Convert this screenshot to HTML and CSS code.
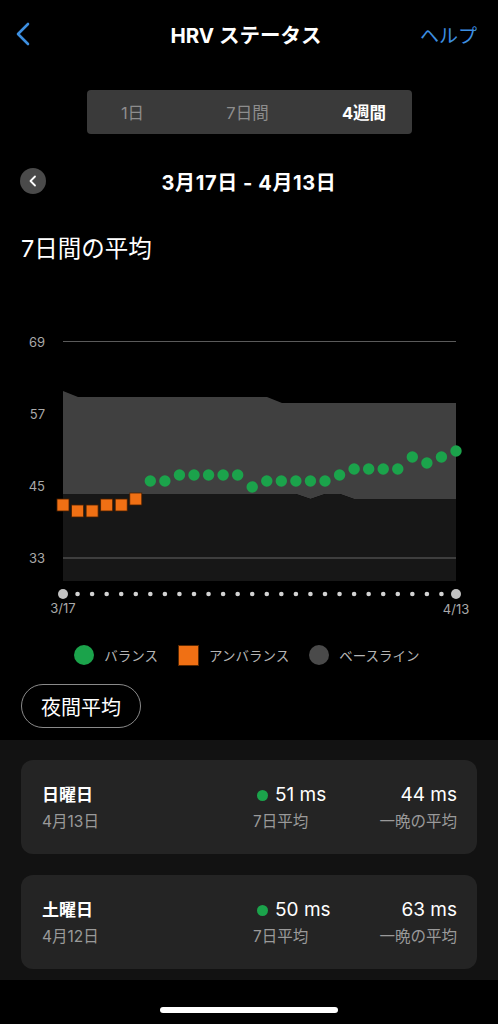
FILE: index.html
```html
<!DOCTYPE html>
<html lang="ja">
<head>
    <meta charset="UTF-8">
    <meta name="viewport" content="width=device-width, initial-scale=1.0">
    <title>HRVステータス</title>
    <link rel="stylesheet" href="styles.css">
</head>
<body>

  <div class="nav">
    <div class="nav-back">
      <svg width="16" height="24" viewBox="0 0 16 24">
        <polyline points="13,2 3,12 13,22" fill="none" stroke="#3d8fe0" stroke-width="2.6" stroke-linecap="round" stroke-linejoin="round"/>
      </svg>
    </div>
    <div class="nav-title">HRV ステータス</div>
    <div class="nav-help">ヘルプ</div>
  </div>

  <div class="segment">
    <div class="segment-item">1日</div>
    <div class="segment-item">7日間</div>
    <div class="segment-item active">4週間</div>
  </div>

  <div class="date-row">
    <div class="date-prev">
      <svg width="10" height="12" viewBox="0 0 10 12">
        <polyline points="7,1.5 2.5,6 7,10.5" fill="none" stroke="#fff" stroke-width="1.8" stroke-linecap="round" stroke-linejoin="round"/>
      </svg>
    </div>
    <div class="date-range">3月17日 - 4月13日</div>
    <div></div>
  </div>

  <h2 class="chart-title">7日間の平均</h2>

  <div class="chart">
    <svg width="498" height="356" viewBox="0 264 498 356">
      <!-- grid labels -->
      <g class="axis-label">
        <text x="45" y="346.5" text-anchor="end">69</text>
        <text x="45" y="418.5" text-anchor="end">57</text>
        <text x="45" y="490.5" text-anchor="end">45</text>
        <text x="45" y="562.5" text-anchor="end">33</text>
      </g>
      <line x1="63" y1="341.5" x2="456" y2="341.5" stroke="#5a5a5a" stroke-width="1"/>

      <!-- baseline band -->
      <polygon points="63,391 78,397 267,397 282,403 456,403 456,499 354,499 340,494 325,494 310.5,499 296,494 63,494" fill="#404040"/>
      <polygon points="63,494 296,494 310.5,499 325,494 340,494 354,499 456,499 456,581 63,581" fill="#171717"/>
      <line x1="63" y1="558" x2="456" y2="558" stroke="#4c4c4c" stroke-width="1.5"/>

      <!-- unbalanced -->
      <g fill="#f07014" stroke="#4a2000" stroke-width="0.8">
        <rect x="57" y="499" width="12" height="12"/>
        <rect x="71.56" y="505" width="12" height="12"/>
        <rect x="86.11" y="505" width="12" height="12"/>
        <rect x="100.67" y="499" width="12" height="12"/>
        <rect x="115.22" y="499" width="12" height="12"/>
        <rect x="129.78" y="493" width="12" height="12"/>
      </g>

      <!-- balanced -->
      <g fill="#1ba34b">
        <circle cx="150.33" cy="481" r="5.7"/>
        <circle cx="164.89" cy="481" r="5.7"/>
        <circle cx="179.44" cy="475" r="5.7"/>
        <circle cx="194" cy="475" r="5.7"/>
        <circle cx="208.56" cy="475" r="5.7"/>
        <circle cx="223.11" cy="475" r="5.7"/>
        <circle cx="237.67" cy="475" r="5.7"/>
        <circle cx="252.22" cy="487" r="5.7"/>
        <circle cx="266.78" cy="481" r="5.7"/>
        <circle cx="281.33" cy="481" r="5.7"/>
        <circle cx="295.89" cy="481" r="5.7"/>
        <circle cx="310.44" cy="481" r="5.7"/>
        <circle cx="325" cy="481" r="5.7"/>
        <circle cx="339.56" cy="475" r="5.7"/>
        <circle cx="354.11" cy="469" r="5.7"/>
        <circle cx="368.67" cy="469" r="5.7"/>
        <circle cx="383.22" cy="469" r="5.7"/>
        <circle cx="397.78" cy="469" r="5.7"/>
        <circle cx="412.33" cy="457" r="5.7"/>
        <circle cx="426.89" cy="463" r="5.7"/>
        <circle cx="441.44" cy="457" r="5.7"/>
        <circle cx="456" cy="451" r="5.7"/>
      </g>

      <!-- x axis -->
      <g fill="#d2d2d2">
        <circle cx="63" cy="594" r="5" fill="#c2c2c2"/>
        <circle cx="77.56" cy="594" r="2.3"/>
        <circle cx="92.11" cy="594" r="2.3"/>
        <circle cx="106.67" cy="594" r="2.3"/>
        <circle cx="121.22" cy="594" r="2.3"/>
        <circle cx="135.78" cy="594" r="2.3"/>
        <circle cx="150.33" cy="594" r="2.3"/>
        <circle cx="164.89" cy="594" r="2.3"/>
        <circle cx="179.44" cy="594" r="2.3"/>
        <circle cx="194" cy="594" r="2.3"/>
        <circle cx="208.56" cy="594" r="2.3"/>
        <circle cx="223.11" cy="594" r="2.3"/>
        <circle cx="237.67" cy="594" r="2.3"/>
        <circle cx="252.22" cy="594" r="2.3"/>
        <circle cx="266.78" cy="594" r="2.3"/>
        <circle cx="281.33" cy="594" r="2.3"/>
        <circle cx="295.89" cy="594" r="2.3"/>
        <circle cx="310.44" cy="594" r="2.3"/>
        <circle cx="325" cy="594" r="2.3"/>
        <circle cx="339.56" cy="594" r="2.3"/>
        <circle cx="354.11" cy="594" r="2.3"/>
        <circle cx="368.67" cy="594" r="2.3"/>
        <circle cx="383.22" cy="594" r="2.3"/>
        <circle cx="397.78" cy="594" r="2.3"/>
        <circle cx="412.33" cy="594" r="2.3"/>
        <circle cx="426.89" cy="594" r="2.3"/>
        <circle cx="441.44" cy="594" r="2.3"/>
        <circle cx="456" cy="594" r="5" fill="#c2c2c2"/>
      </g>
      <g class="axis-label">
        <text x="63" y="613" text-anchor="middle">3/17</text>
        <text x="456" y="614" text-anchor="middle">4/13</text>
      </g>
    </svg>
  </div>

  <div class="legend">
    <div class="legend-item"><span class="swatch dot-green"></span>バランス</div>
    <div class="legend-item"><span class="swatch square-orange"></span>アンバランス</div>
    <div class="legend-item"><span class="swatch dot-gray"></span>ベースライン</div>
  </div>

  <div class="pill-row">
    <div class="pill">夜間平均</div>
  </div>

  <div class="list">
    <div class="card">
      <div class="card-col">
        <div class="card-day">日曜日</div>
        <div class="card-sub">4月13日</div>
      </div>
      <div class="card-col">
        <div class="card-value"><span class="status-dot"></span>51 ms</div>
        <div class="card-sub">7日平均</div>
      </div>
      <div class="card-col right">
        <div class="card-value">44 ms</div>
        <div class="card-sub">一晩の平均</div>
      </div>
    </div>

    <div class="card">
      <div class="card-col">
        <div class="card-day">土曜日</div>
        <div class="card-sub">4月12日</div>
      </div>
      <div class="card-col">
        <div class="card-value"><span class="status-dot"></span>50 ms</div>
        <div class="card-sub">7日平均</div>
      </div>
      <div class="card-col right">
        <div class="card-value">63 ms</div>
        <div class="card-sub">一晩の平均</div>
      </div>
    </div>
  </div>

  <div class="home-bar">
    <div class="home-indicator"></div>
  </div>

</body>
</html>
```

FILE: styles.css
```css
body {
    margin: 0;
    background-color: #000;
    color: #fff;
    font-family: Inter, "Noto Sans CJK JP", sans-serif;
    width: 498px;
    overflow: hidden;
}

.nav {
    display: grid;
    grid-template-columns: 1fr auto 1fr;
    align-items: center;
    height: 68px;
    padding: 0 21px 0 15px;
}

.nav-back {
    display: flex;
    align-items: center;
}

.nav-title {
    font-size: 20.5px;
    font-weight: bold;
}

.nav-help {
    justify-self: end;
    color: #3d8fe0;
    font-size: 19px;
}

.segment {
    display: grid;
    grid-template-columns: 92px 138px 95px;
    align-items: center;
    width: 325px;
    height: 44px;
    margin: 22px auto 0;
    background-color: #3a3a3a;
    border-radius: 4px;
}

.segment-item {
    text-align: center;
    font-size: 16.5px;
    color: #8d8d8d;
}

.segment-item.active {
    color: #fff;
    font-weight: bold;
}

.date-row {
    display: grid;
    grid-template-columns: 1fr auto 1fr;
    align-items: center;
    height: 34px;
    margin-top: 30px;
    padding: 0 20px;
}

.date-prev {
    width: 26px;
    height: 26px;
    border-radius: 50%;
    background-color: #4a4a4a;
    display: flex;
    align-items: center;
    justify-content: center;
}

.date-range {
    font-size: 20px;
    font-weight: bold;
    letter-spacing: 0.6px;
}

.chart-title {
    margin: 36px 0 0 21px;
    font-size: 23.5px;
    font-weight: normal;
    line-height: 30px;
}

.chart svg {
    display: block;
}

.axis-label text {
    font-family: Inter, sans-serif;
    font-size: 13px;
    fill: #a9a9a9;
}

.legend {
    display: flex;
    justify-content: center;
    align-items: center;
    gap: 20px;
    height: 30px;
    margin-top: 20px;
    padding-right: 4px;
}

.legend-item {
    display: flex;
    align-items: center;
    gap: 10px;
    font-size: 13.5px;
    color: #b5b5b5;
}

.swatch {
    display: block;
    width: 20px;
    height: 20px;
}

.dot-green {
    border-radius: 50%;
    background-color: #1ba34b;
}

.square-orange {
    width: 21px;
    height: 21px;
    background-color: #f07014;
    box-shadow: inset 0 0 0 1px #5a2800;
}

.dot-gray {
    border-radius: 50%;
    background-color: #4a4a4a;
}

.pill-row {
    margin-top: 14px;
    padding-left: 21px;
}

.pill {
    display: inline-flex;
    align-items: center;
    height: 44px;
    padding: 0 19px;
    box-sizing: border-box;
    border: 1.5px solid #8a8a8a;
    border-radius: 22px;
    font-size: 20px;
}

.list {
    margin-top: 12px;
    background-color: #121212;
    padding: 20px 21px 11px;
    display: flex;
    flex-direction: column;
    gap: 21px;
}

.card {
    display: grid;
    grid-template-columns: 211px 1fr auto;
    height: 94px;
    box-sizing: border-box;
    padding: 23px 20px 0 21px;
    background-color: #242424;
    border-radius: 12px;
}

.card-col.right {
    text-align: right;
}

.card-day {
    font-size: 17px;
    font-weight: bold;
    line-height: 24px;
}

.card-value {
    font-size: 19px;
    line-height: 24px;
    display: flex;
    align-items: center;
}

.card-col.right .card-value {
    justify-content: flex-end;
}

.status-dot {
    display: inline-block;
    width: 11px;
    height: 11px;
    border-radius: 50%;
    background-color: #1ba34b;
    margin: 0 7px 0 4px;
}

.card-sub {
    margin-top: 4px;
    font-size: 15.5px;
    line-height: 22px;
    color: #9a9a9a;
}

.home-bar {
    height: 44px;
    display: flex;
    justify-content: center;
    align-items: flex-start;
}

.home-indicator {
    margin-top: 27px;
    width: 178px;
    height: 6px;
    border-radius: 3px;
    background-color: #fff;
}
```
